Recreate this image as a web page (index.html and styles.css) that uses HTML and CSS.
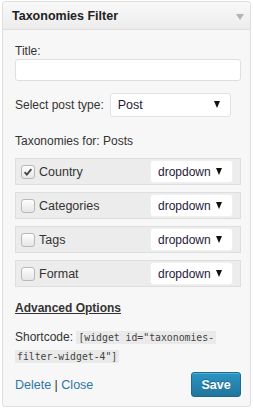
FILE: index.html
```html
<!DOCTYPE html>
<html>
<head>
<meta charset="utf-8">
<link rel="stylesheet" href="styles.css">
</head>
<body>
<div class="widget">
  <div class="widget-top">
    <h3 class="widget-title">Taxonomies Filter</h3>
    <span class="toggle-arrow"></span>
  </div>
  <div class="widget-inside">
    <div class="field">
      <label class="label">Title:</label>
      <div class="text-input"></div>
    </div>
    <div class="field-inline">
      <span class="label">Select post type:</span>
      <div class="select select-post"><span>Post</span><span class="arrow"></span></div>
    </div>
    <p class="tax-for">Taxonomies for: Posts</p>
    <div class="tax-list">
      <div class="tax-row">
        <span class="check checked"><svg viewBox="0 0 12 12" width="10" height="10"><path d="M2 6.2 L4.6 9 L10 2.6" fill="none" stroke="#444" stroke-width="2.2"/></svg></span>
        <span class="tax-name">Country</span>
        <div class="select select-tax"><span>dropdown</span><span class="arrow"></span></div>
      </div>
      <div class="tax-row">
        <span class="check"></span>
        <span class="tax-name">Categories</span>
        <div class="select select-tax"><span>dropdown</span><span class="arrow"></span></div>
      </div>
      <div class="tax-row">
        <span class="check"></span>
        <span class="tax-name">Tags</span>
        <div class="select select-tax"><span>dropdown</span><span class="arrow"></span></div>
      </div>
      <div class="tax-row">
        <span class="check"></span>
        <span class="tax-name">Format</span>
        <div class="select select-tax"><span>dropdown</span><span class="arrow"></span></div>
      </div>
    </div>
    <a class="advanced">Advanced Options</a>
    <div class="shortcode">
      <div class="sc-line"><span>Shortcode:</span> <code>[widget id="taxonomies-</code></div>
      <div class="sc-line"><code>filter-widget-4"]</code></div>
    </div>
    <div class="widget-control">
      <div class="links"><a class="link">Delete</a> | <a class="link">Close</a></div>
      <button class="save">Save</button>
    </div>
  </div>
</div>
</body>
</html>
```
FILE: styles.css
```css
html, body {
  margin: 0;
  padding: 0;
  background: #ffffff;
}
body {
  font-family: "Liberation Sans", Arial, sans-serif;
  font-size: 12px;
  color: #333;
}
.widget {
  margin: 1px 2px 0 2px;
  border: 1px solid #dfdfdf;
  border-radius: 3px;
  background: #f7f7f7;
  height: 406px;
  box-sizing: border-box;
  display: flex;
  flex-direction: column;
}
.widget-top {
  height: 27px;
  background: linear-gradient(to bottom, #f9f9f9, #ececec);
  border-bottom: 1px solid #dfdfdf;
  border-radius: 3px 3px 0 0;
  display: flex;
  align-items: center;
  justify-content: space-between;
  padding: 0 6px 0 9px;
}
.widget-title {
  margin: 0;
  font-size: 12.5px;
  font-weight: bold;
  color: #222;
}
.toggle-arrow {
  width: 0;
  height: 0;
  border-left: 4px solid transparent;
  border-right: 4px solid transparent;
  border-top: 6px solid #b4b4b4;
  margin-top: 2px;
}
.widget-inside {
  padding: 13px 9px 0 12px;
  flex: 1;
  display: flex;
  flex-direction: column;
}
.field .label {
  display: block;
  line-height: 16px;
  margin-bottom: 0;
}
.text-input {
  height: 20px;
  background: #fff;
  border: 1px solid #dfdfdf;
  border-radius: 3px;
}
.field-inline {
  display: flex;
  align-items: center;
  margin-top: 12px;
}
.field-inline .label {
  margin-right: 6px;
}
.select {
  background: #fff;
  border: 1px solid #e2e2e2;
  border-radius: 3px;
  display: flex;
  align-items: center;
  justify-content: space-between;
  box-sizing: border-box;
  color: #1f1a3a;
  font-size: 12.5px;
}
.select .arrow {
  width: 0;
  height: 0;
  border-left: 3.5px solid transparent;
  border-right: 3.5px solid transparent;
  border-top: 7px solid #111;
  margin-top: -1px;
}
.select-post {
  width: 121px;
  height: 24px;
  padding: 0 10px 0 7px;
}
.tax-for {
  margin: 16px 0 0 0;
  line-height: 16px;
}
.tax-list {
  margin-top: 9px;
  display: flex;
  flex-direction: column;
  gap: 7px;
}
.tax-row {
  height: 27px;
  box-sizing: border-box;
  background: #ececec;
  border: 1px solid #dedede;
  display: flex;
  align-items: center;
  padding: 0 7px 0 5px;
  font-size: 12.5px;
}
.check {
  width: 12px;
  height: 12px;
  border: 1px solid #b8b8b8;
  border-radius: 3px;
  background: linear-gradient(to bottom, #fdfdfd, #e6e6e6);
  display: flex;
  align-items: center;
  justify-content: center;
  margin-right: 4px;
}
.tax-name {
  flex: 1;
}
.select-tax {
  width: 83px;
  height: 23px;
  padding: 0 10px 0 7px;
  border-color: #f0f0f0;
  font-size: 12px;
}
.advanced {
  margin-top: 13px;
  font-weight: bold;
  text-decoration: underline;
  color: #333;
  line-height: 16px;
  align-self: flex-start;
}
.shortcode {
  margin: 12px 0 0 0;
  line-height: 19px;
}
.shortcode code {
  font-family: "DejaVu Sans Mono", "Liberation Mono", monospace;
  font-size: 9.8px;
  background: #eaeaea;
  color: #444;
  padding: 1px 2px;
}
.widget-control {
  margin-top: 6px;
  display: flex;
  justify-content: space-between;
  align-items: center;
}
.link {
  color: #2d76a8;
}
.links {
  color: #333;
  font-size: 12.5px;
}
.save {
  width: 50px;
  height: 25px;
  border: 1px solid #1e6a8d;
  border-radius: 3px;
  background: linear-gradient(to bottom, #2a95c5, #21759b);
  color: #fff;
  font-family: "Liberation Sans", Arial, sans-serif;
  font-size: 12.5px;
  font-weight: bold;
  padding: 0;
  box-shadow: inset 0 1px 0 rgba(120,200,230,0.5);
  text-shadow: 0 -1px 0 rgba(0,0,0,0.25);
}
```
